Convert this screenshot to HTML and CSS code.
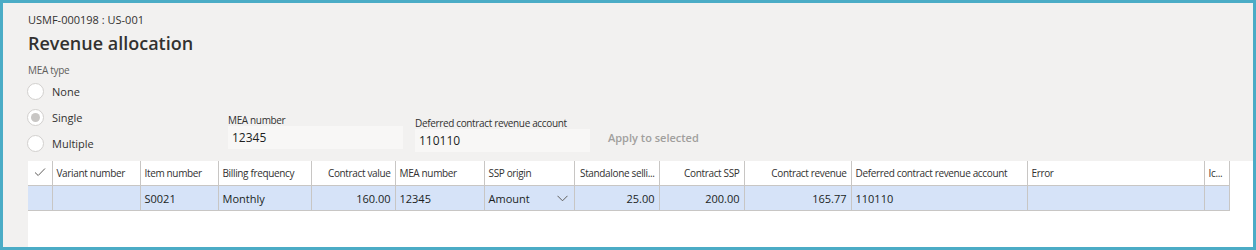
FILE: index.html
```html
<!DOCTYPE html>
<html lang="en">
<head>
  <meta charset="UTF-8">
  <title>Revenue allocation</title>
  <link rel="stylesheet" href="styles.css">
</head>
<body>
  <div class="frame">
    <div class="page">
      <div class="caption">USMF-000198 : US-001</div>
      <h1>Revenue allocation</h1>

      <div class="form-row">
        <div class="mea-type">
          <div class="group-label">MEA type</div>
          <label class="radio"><span class="dot"></span>None</label>
          <label class="radio checked"><span class="dot"></span>Single</label>
          <label class="radio"><span class="dot"></span>Multiple</label>
        </div>
        <div class="field">
          <div class="field-label">MEA number</div>
          <div class="input">12345</div>
        </div>
        <div class="field lower">
          <div class="field-label">Deferred contract revenue account</div>
          <div class="input">110110</div>
        </div>
        <div class="apply">Apply to selected</div>
      </div>
    </div>

    <div class="grid-area">
      <table class="grid">
        <colgroup>
          <col style="width:24px">
          <col style="width:88px">
          <col style="width:78px">
          <col style="width:93px">
          <col style="width:84px">
          <col style="width:89px">
          <col style="width:90px">
          <col style="width:85px">
          <col style="width:85px">
          <col style="width:107px">
          <col style="width:176px">
          <col style="width:177px">
          <col style="width:25px">
        </colgroup>
        <thead>
          <tr>
            <th class="check">
              <svg width="12" height="10" viewBox="0 0 12 10"><path d="M1 5.5 L4.2 8.5 L11 1.5" fill="none" stroke="#605e5c" stroke-width="1"/></svg>
            </th>
            <th>Variant number</th>
            <th>Item number</th>
            <th>Billing frequency</th>
            <th class="num">Contract value</th>
            <th>MEA number</th>
            <th>SSP origin</th>
            <th class="num">Standalone selli...</th>
            <th class="num">Contract SSP</th>
            <th class="num">Contract revenue</th>
            <th>Deferred contract revenue account</th>
            <th>Error</th>
            <th>Ic...</th>
          </tr>
        </thead>
        <tbody>
          <tr class="selected">
            <td></td>
            <td></td>
            <td>S0021</td>
            <td>Monthly</td>
            <td class="num">160.00</td>
            <td>12345</td>
            <td class="combo">Amount
              <svg class="chevron" width="11" height="7" viewBox="0 0 11 7"><path d="M0.5 0.8 L5.5 5.8 L10.5 0.8" fill="none" stroke="#605e5c" stroke-width="1"/></svg>
            </td>
            <td class="num">25.00</td>
            <td class="num">200.00</td>
            <td class="num">165.77</td>
            <td>110110</td>
            <td></td>
            <td></td>
          </tr>
        </tbody>
      </table>
    </div>
  </div>
</body>
</html>
```

FILE: styles.css
```css
* {
  box-sizing: border-box;
}
body {
  margin: 0;
  font-family: "Segoe UI", "Open Sans", sans-serif;
  color: #323130;
}
.frame {
  width: 1256px;
  height: 250px;
  border: 3px solid #4bacc6;
  background-color: #f2f1f0;
  display: flex;
  flex-direction: column;
  overflow: hidden;
}
.page {
  padding: 10px 0 0 25px;
  height: 158px;
}
.caption {
  font-size: 11px;
  line-height: 13px;
  color: #323130;
}
h1 {
  margin: 5px 0 0 0;
  font-size: 18px;
  line-height: 24px;
  font-weight: 600;
  color: #323130;
}
.form-row {
  display: flex;
  align-items: flex-start;
  margin-top: 9px;
}
.mea-type {
  width: 200px;
}
.group-label {
  font-size: 10px;
  line-height: 12px;
  letter-spacing: -0.3px;
  color: #605e5c;
  margin-bottom: 2px;
}
.radio {
  display: flex;
  align-items: center;
  height: 26px;
  font-size: 11px;
  color: #323130;
}
.dot {
  width: 17px;
  height: 17px;
  border: 1px solid #d2d0ce;
  border-radius: 50%;
  background-color: #fff;
  margin: 0 8px 0 -1px;
  display: flex;
  align-items: center;
  justify-content: center;
}
.radio.checked .dot::after {
  content: "";
  width: 9px;
  height: 9px;
  border-radius: 50%;
  background-color: #c8c6c4;
}
.field {
  width: 175px;
  margin-right: 12px;
  margin-top: 50px;
}
.field.lower {
  margin-top: 53px;
}
.field-label {
  font-size: 10px;
  line-height: 12px;
  letter-spacing: -0.35px;
  color: #323130;
}
.input {
  height: 23px;
  background-color: #f8f7f6;
  font-size: 12px;
  line-height: 23px;
  padding-left: 4px;
  color: #201f1e;
}
.apply {
  margin: 66px 0 0 6px;
  font-size: 11px;
  font-weight: 600;
  color: #a19f9d;
}
.grid-area {
  flex: 1;
  margin-left: 25px;
  background-color: #fff;
}
.grid {
  border-collapse: collapse;
  table-layout: fixed;
  width: 1201px;
}
.grid th,
.grid td {
  border-left: 1px solid #c8c6c4;
  padding: 1px 4px 0;
  white-space: nowrap;
  overflow: hidden;
  text-align: left;
}
.grid th:first-child,
.grid td:first-child {
  border-left: none;
}
.grid th:last-child,
.grid td:last-child {
  border-right: 1px solid #c8c6c4;
}
.grid th {
  height: 24px;
  font-size: 10px;
  letter-spacing: -0.35px;
  font-weight: 400;
  color: #323130;
  border-bottom: 1px solid #c8c6c4;
}
.grid td {
  height: 25px;
  font-size: 11px;
  color: #201f1e;
  border-bottom: 1px solid #c8c6c4;
}
.grid .selected td {
  background-color: #d6e3f8;
}
.grid .num {
  text-align: right;
}
.grid th.check {
  text-align: center;
  padding: 0;
}
.grid td.combo {
  position: relative;
}
.chevron {
  position: absolute;
  right: 6px;
  top: 9px;
}
```
